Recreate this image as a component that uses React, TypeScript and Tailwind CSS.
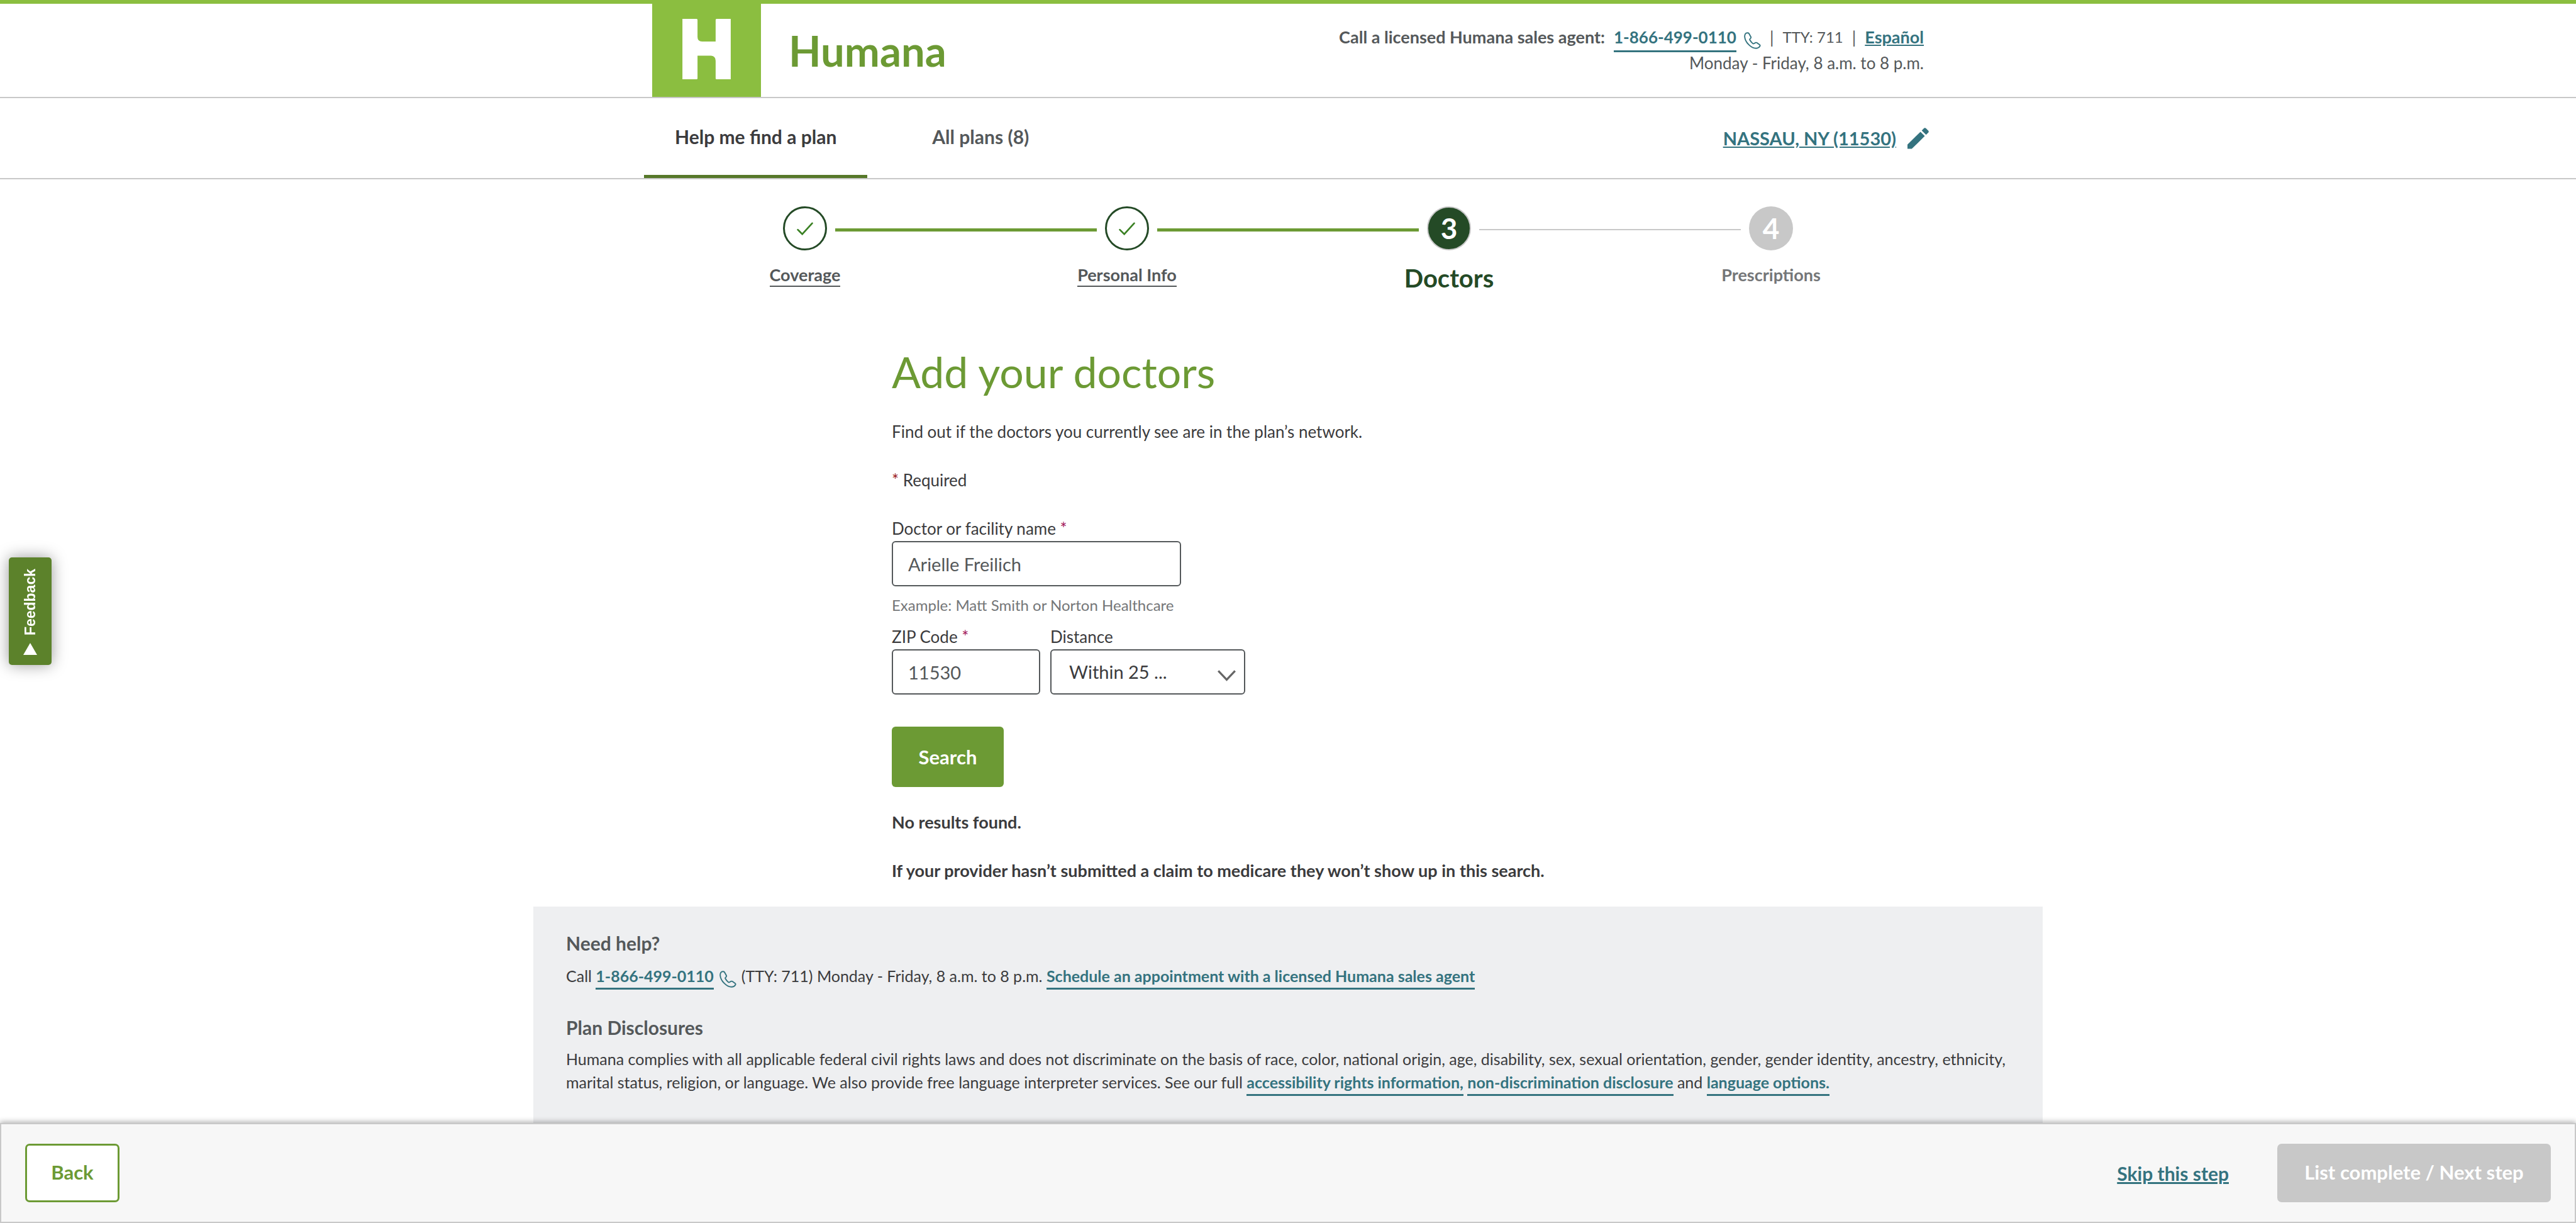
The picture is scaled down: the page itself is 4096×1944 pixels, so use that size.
import React from "react";

const linkCls = "border-b-[3px] border-[#34737f] pb-1 font-bold text-[#34737f]";

function PhoneIcon({ className }: { className?: string }) {
  return (
    <svg viewBox="0 0 34 34" fill="none" stroke="#34737f" strokeWidth="2.4" strokeLinejoin="round" className={className} aria-hidden="true">
      <path d="M7 1.5C3 1.5 1.2 5 1.5 9.500 2 15 5 20.500 9.500 25c4 4 9.500 7.500 14.500 7.500 4 0 7-2.500 8-4.500.5-1 .2-2-.8-2.700l-5.200-3.800c-1-.7-2-.8-3-.2l-3 1.700c-1 .5-1.800.3-2.700-.5-2.300-2-4.300-4.500-5.500-6.700-.5-.9-.3-1.700.5-2.500l1.200-1.300c.7-.8.7-1.700.2-2.600L10 2.800C9.300 1.800 8.300 1.500 7 1.500z" />
    </svg>
  );
}

function PencilIcon() {
  return (
    <svg viewBox="0 0 42 42" fill="#34737f" className="size-[34px]" aria-hidden="true">
      <path d="M0 33v8.500h8.500L34 16.500 25.500 8z" />
      <path d="M28 5.500l4.500-4.500c1-1 2.500-1 3.500 0l5 5c1 1 1 2.500 0 3.500L36.500 14z" />
    </svg>
  );
}

function Half({ kind }: { kind: "none" | "done" | "todo" }) {
  return (
    <span className="flex-1 pt-1">
      {kind === "done" && <span className="block h-[5px] bg-[#6c9a34]" />}
      {kind === "todo" && <span className="block h-[2px] bg-[#c8c8c8]" />}
    </span>
  );
}

type StepProps = {
  left: "none" | "done" | "todo";
  right: "none" | "done" | "todo";
  circle: React.ReactNode;
  children: React.ReactNode;
};

function Step({ left, right, circle, children }: StepProps) {
  return (
    <li className="flex flex-1 flex-col items-center">
      <span className="flex w-full items-center gap-[13px]">
        <Half kind={left} />
        {circle}
        <Half kind={right} />
      </span>
      {children}
    </li>
  );
}

function DoneCircle() {
  return (
    <span className="flex size-[70px] items-center justify-center rounded-full border-[3px] border-[#244a26]">
      <svg viewBox="0 0 33 26" fill="none" stroke="#3b8124" strokeWidth="3.4" strokeLinecap="round" className="h-[21px] w-[26px]" aria-hidden="true">
        <path d="M2 15l9 9L31 2" />
      </svg>
    </span>
  );
}

const stepLink = "mt-[24px] border-b-2 border-[#54585a] pb-[2px] text-[27px] leading-[30px] font-bold text-[#54585a]";

export default function App() {
  return (
    <div className="flex min-h-screen flex-col bg-white font-['Lato',sans-serif] text-[26px] leading-[36px] text-[#3b3b3d]">
      <header className="border-t-[6px] border-b-2 border-t-[#8bbe40] border-b-[#c8c8c8]">
        <div className="mx-auto flex max-w-[2048px] items-start justify-between px-[13px]">
          <a href="#" className="flex items-center gap-[44px]">
            <span className="flex h-[148px] w-[173px] justify-center bg-[#8bbe40] pt-[24px]">
              <svg viewBox="0 0 96 120" fill="#fff" className="h-[96px] w-[77px]" role="img" aria-label="H">
                <path d="M0 0h28q2 0 2 2v34q0 9 9 9h27V2q0-2 2-2h28v120H68q-2 0-2-2V83q0-9-9-10H30v45q0 2-2 2H0z" />
              </svg>
            </span>
            <span className="text-[67px] leading-[80px] font-bold text-[#6c9a34]">Humana</span>
          </a>
          <div className="pt-[36px] text-right leading-[34px] text-[#54585a]">
            <p className="flex items-start justify-end">
              <strong className="mr-[14px] text-[27px]">Call a licensed Humana sales agent:</strong>
              <a href="tel:18664990110" className={linkCls}>1-866-499-0110</a>
              <PhoneIcon className="mt-[9px] ml-[12px] size-[27px]" />
              <span className="mx-[14px]">|</span>
              <span className="text-[24px]">TTY: 711</span>
              <span className="mx-[14px]">|</span>
              <a href="#" className="text-[27px] font-bold text-[#34737f] underline">Español</a>
            </p>
            <p>Monday - Friday, 8 a.m. to 8 p.m.</p>
          </div>
        </div>
      </header>

      <nav className="border-b-2 border-[#c8c8c8]">
        <div className="mx-auto flex max-w-[2048px] items-stretch justify-between">
          <div className="flex gap-[54px] text-[30px] leading-[34px] font-bold">
            <a href="#" aria-current="page" className="border-b-[5px] border-[#567829] px-[49px] pt-[44px] pb-[44px]">Help me find a plan</a>
            <a href="#" className="px-[49px] pt-[44px] text-[#54585a]">All plans (8)</a>
          </div>
          <a href="#" className="flex items-center gap-[18px] pr-[5px] text-[29px] font-bold text-[#34737f]">
            <span className="underline">NASSAU, NY (11530)</span>
            <PencilIcon />
          </a>
        </div>
      </nav>

      <main className="flex flex-1 flex-col">
        <ol className="mx-auto flex w-full max-w-[2048px] pt-[43px]">
          <Step left="none" right="done" circle={<DoneCircle />}>
            <a href="#" className={stepLink}>Coverage</a>
          </Step>
          <Step left="done" right="done" circle={<DoneCircle />}>
            <a href="#" className={stepLink}>Personal Info</a>
          </Step>
          <Step
            left="done"
            right="todo"
            circle={<span className="flex size-[70px] items-center justify-center rounded-full border-2 border-[#c8c8c8] bg-[#244a26] text-[46px] font-bold text-white">3</span>}
          >
            <strong className="mt-[20px] text-[40px] leading-[48px] text-[#244a26]">Doctors</strong>
          </Step>
          <Step
            left="todo"
            right="none"
            circle={<span className="flex size-[70px] items-center justify-center rounded-full bg-[#c8c8c8] text-[46px] font-bold text-white">4</span>}
          >
            <strong className="mt-[24px] text-[27px] leading-[30px] text-[#747678]">Prescriptions</strong>
          </Step>
        </ol>

        <div className="mx-auto w-full max-w-[1260px]">
          <h1 className="mt-[85px] text-[68px] leading-[80px] font-normal text-[#6c9a34]">Add your doctors</h1>
          <p className="mt-[37px]">Find out if the doctors you currently see are in the plan’s network.</p>
          <p className="mt-[41px]"><span className="text-[#9b1c1f]">*</span> Required</p>
          <form className="mt-[41px]" onSubmit={(e) => e.preventDefault()}>
            <label htmlFor="doctor" className="block">Doctor or facility name <span className="text-[#a3195b]">*</span></label>
            <input id="doctor" defaultValue="Arielle Freilich" className="mt-[2px] block h-[72px] w-[460px] rounded-[6px] border-2 border-[#54585a] px-[24px] text-[29px] text-[#54585a]" />
            <p className="mt-[12px] text-[24px] text-[#747678]">Example: Matt Smith or Norton Healthcare</p>
            <div className="mt-[14px] flex gap-[16px]">
              <div>
                <label htmlFor="zip" className="block">ZIP Code <span className="text-[#a3195b]">*</span></label>
                <input id="zip" defaultValue="11530" className="mt-[2px] block h-[72px] w-[236px] rounded-[6px] border-2 border-[#54585a] px-[24px] text-[29px] text-[#54585a]" />
              </div>
              <div>
                <label htmlFor="distance" className="block">Distance</label>
                <div className="relative mt-[2px]">
                  <select id="distance" className="block h-[72px] w-[310px] appearance-none rounded-[6px] border-2 border-[#54585a] bg-white px-[28px] text-[29px]">
                    <option>Within 25 ...</option>
                  </select>
                  <svg viewBox="0 0 36 22" fill="none" stroke="#666" strokeWidth="4" className="pointer-events-none absolute top-[33px] right-[15px] h-[18px] w-[29px]" aria-hidden="true">
                    <path d="M1.500 1.500L18 19 34.500 1.500" />
                  </svg>
                </div>
              </div>
            </div>
            <button type="submit" className="mt-[51px] h-[96px] w-[178px] rounded-[6px] bg-[#6c9a34] text-[31px] font-bold text-white">Search</button>
          </form>
          <p className="mt-[38px] text-[27px] font-bold">No results found.</p>
          <p className="mt-[41px] text-[27px] font-bold">If your provider hasn’t submitted a claim to medicare they won’t show up in this search.</p>
        </div>

        <section className="mx-auto mt-[39px] w-full max-w-[2400px] flex-1 bg-[#eeeff1] px-[52px] pt-[40px] text-[25px] leading-[37px]">
          <h2 className="text-[30px] font-bold text-[#54585a]">Need help?</h2>
          <p className="mt-[15px]">
            Call <a href="tel:18664990110" className={linkCls}>1-866-499-0110</a>
            <PhoneIcon className="mr-[8px] ml-[9px] inline size-[27px] align-[-9px]" />
            (TTY: 711) Monday - Friday, 8 a.m. to 8 p.m.{" "}
            <a href="#" className={linkCls}>Schedule an appointment with a licensed Humana sales agent</a>
          </p>
          <h2 className="mt-[45px] text-[30px] font-bold text-[#54585a]">Plan Disclosures</h2>
          <p className="mt-[13px]">
            Humana complies with all applicable federal civil rights laws and does not discriminate on the basis of race, color, national origin, age, disability, sex, sexual orientation, gender, gender identity, ancestry, ethnicity, marital status, religion, or language. We also provide free language interpreter services. See our full{" "}
            <a href="#" className={linkCls}>accessibility rights information,</a>{" "}
            <a href="#" className={linkCls}>non-discrimination disclosure</a> and{" "}
            <a href="#" className={linkCls}>language options.</a>
          </p>
        </section>
      </main>

      <footer className="relative flex items-center justify-between border-2 border-[#c8c8c8] bg-[#f7f7f7] px-[38px] py-[31px] text-[31px] font-bold shadow-[0_-2px_8px_rgba(0,0,0,0.3)]">
        <button type="button" className="h-[93px] w-[150px] rounded-[7px] border-[3px] border-[#6c9a34] bg-white pb-[3px] text-[#6c9a34]">Back</button>
        <div className="flex items-center gap-[77px]">
          <a href="#" className="text-[30px] text-[#34737f] underline">Skip this step</a>
          <button type="button" disabled className="h-[93px] w-[435px] rounded-[7px] bg-[#c8c8c8] pb-[3px] text-white">List complete / Next step</button>
        </div>
      </footer>

      <button type="button" className="fixed top-[886px] left-[14px] flex h-[171px] w-[68px] flex-col items-center justify-between rounded-[5px] bg-[#5c822b] pt-[18px] pb-[16px] font-['Liberation_Sans',sans-serif] text-[23px] leading-[28px] font-bold text-white shadow-[0_0_24px_rgba(0,0,0,0.4)]">
        <span className="rotate-180 [writing-mode:vertical-rl]">Feedback</span>
        <svg viewBox="0 0 22 19" fill="#fff" className="h-[19px] w-[22px]" aria-hidden="true">
          <path d="M11 0l11 19H0z" />
        </svg>
      </button>
    </div>
  );
}
